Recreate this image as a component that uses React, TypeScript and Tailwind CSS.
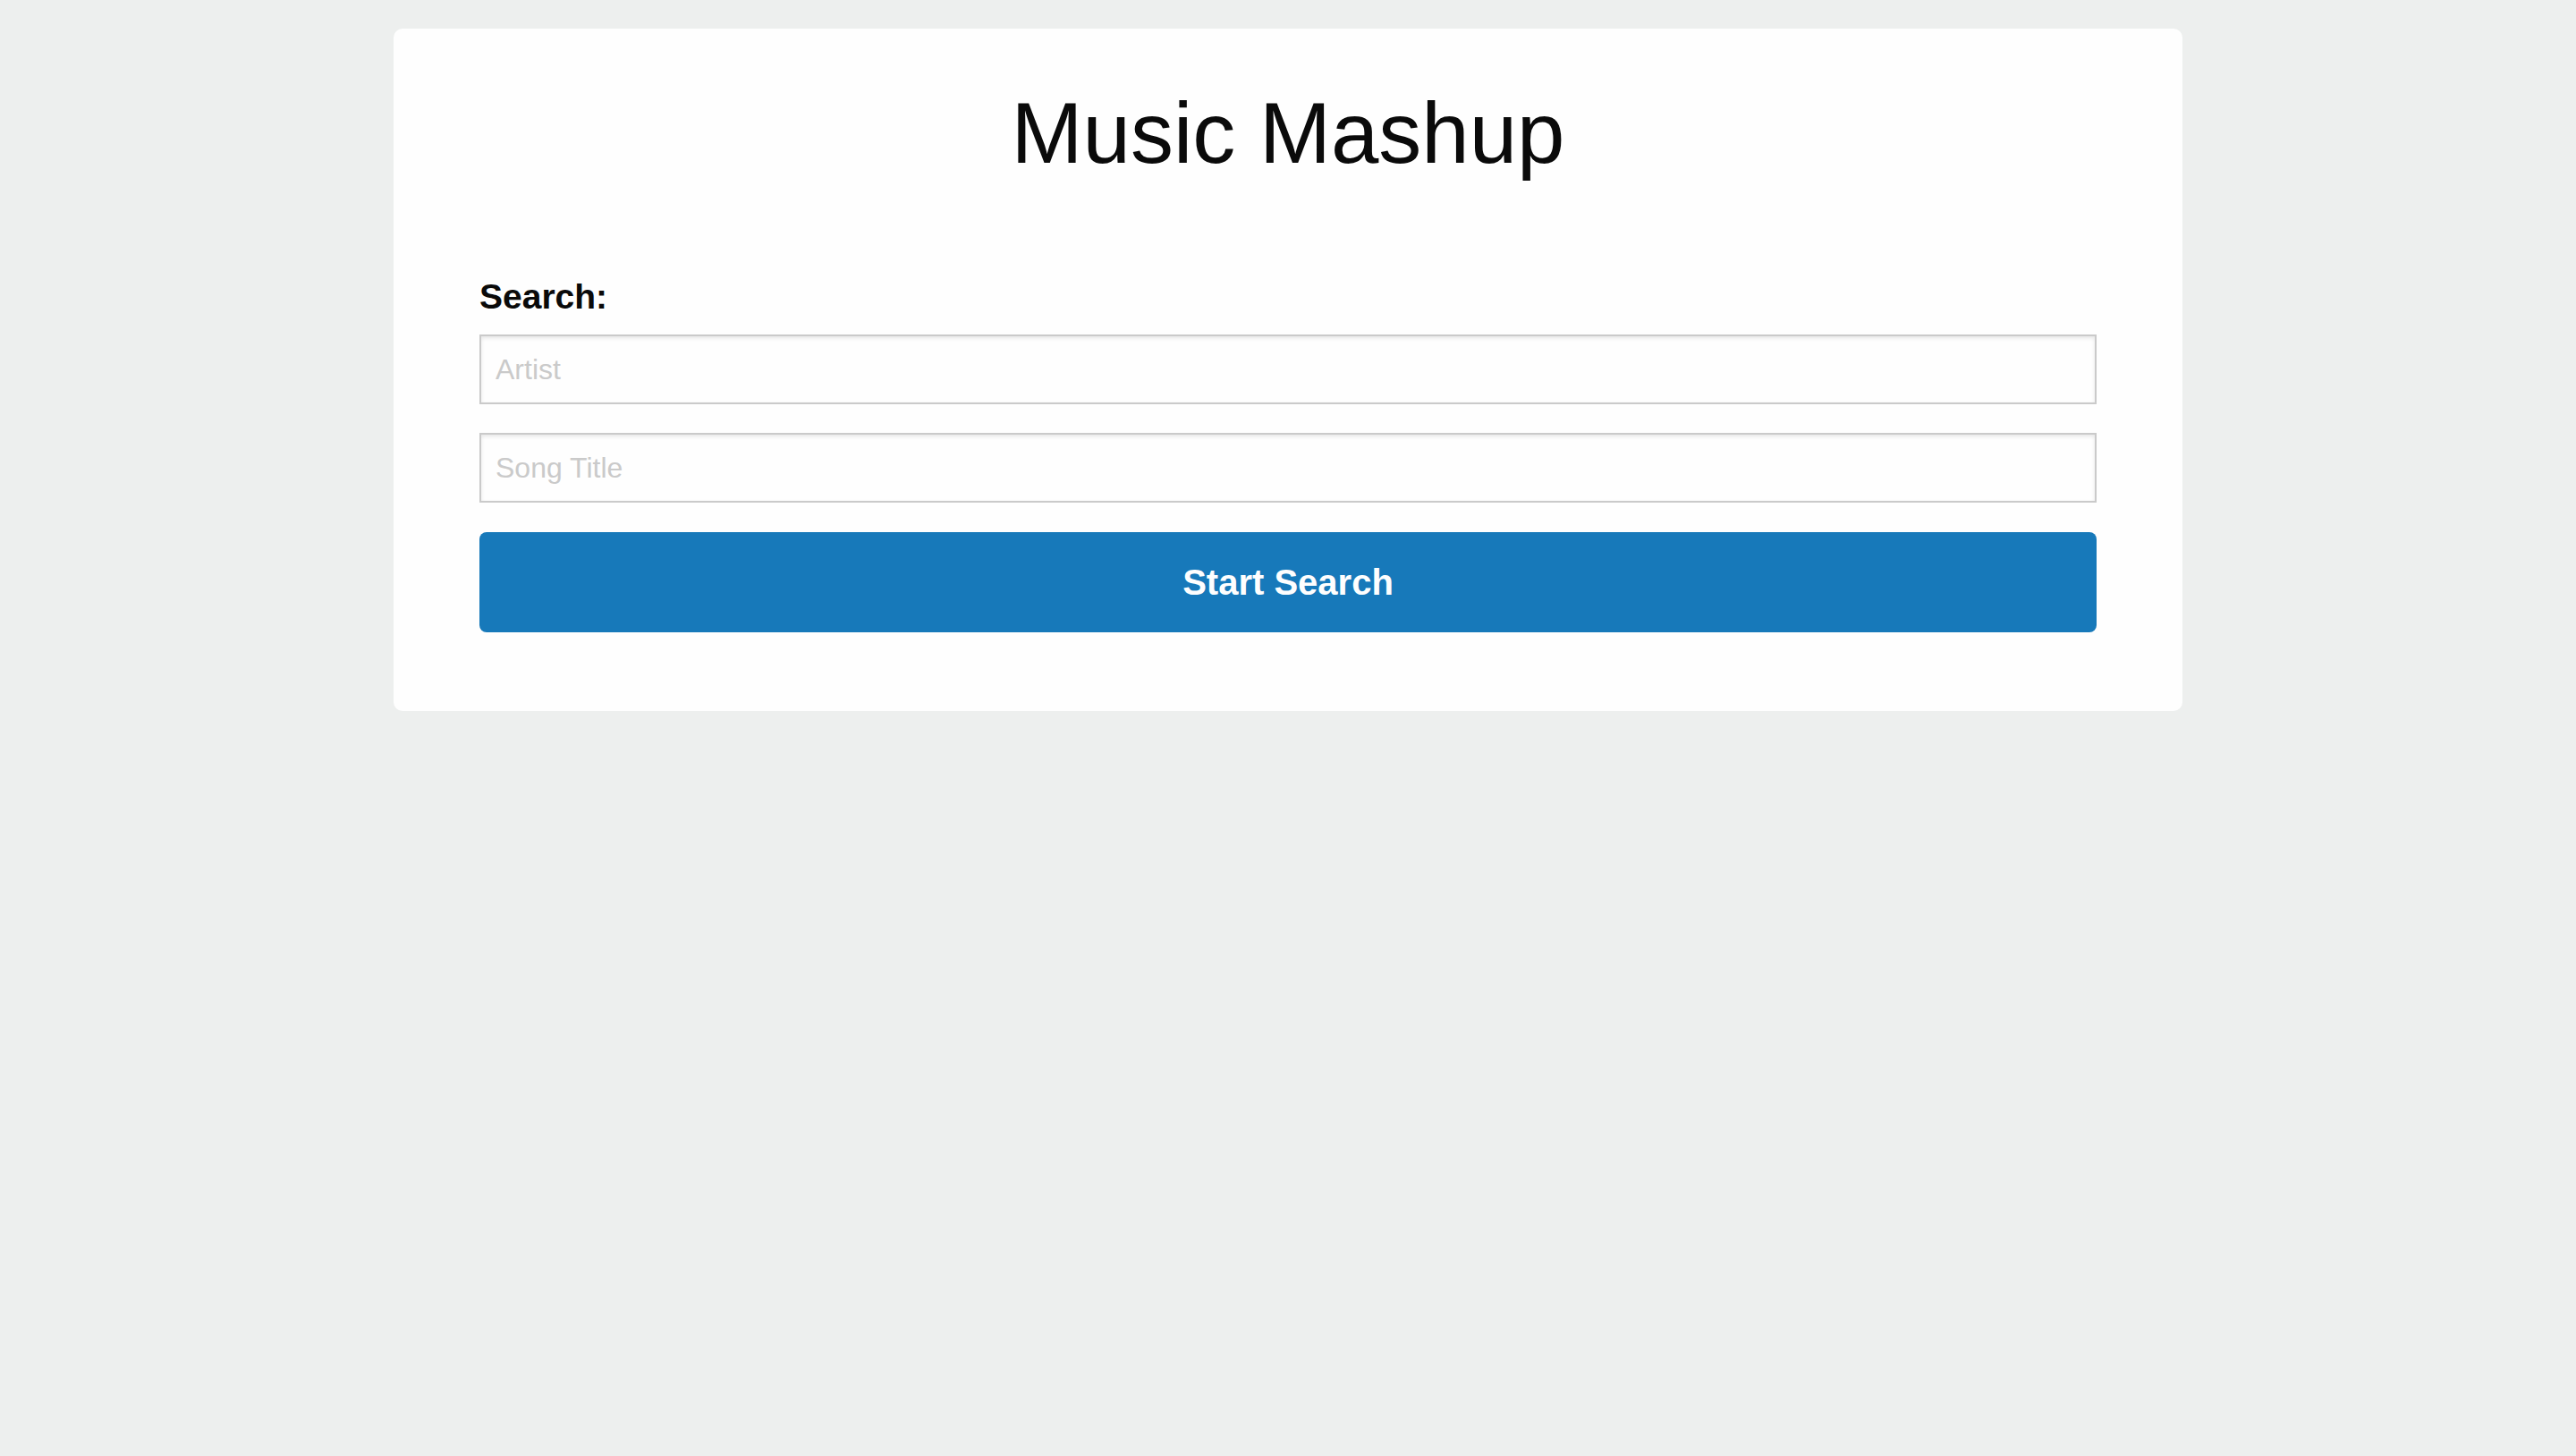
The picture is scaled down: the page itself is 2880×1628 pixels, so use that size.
import { useState } from "react";

const App = () => {
  const [artist, setArtist] = useState("");
  const [title, setTitle] = useState("");

  return (
    <div className="min-h-screen bg-[#edefee] pt-[32px] font-['Liberation_Sans',Arial,sans-serif] text-[#0a0a0a]">
      <div className="mx-auto w-[2000px] rounded-[10px] bg-[#fefefe] px-[96px] pt-[59px] pb-[88px]">
        {/* Title */}
        <h1 className="text-center text-[96px] leading-[115px] font-normal">
          Music Mashup
        </h1>

        {/* Search form */}
        <form className="mt-[102px]" onSubmit={(e) => e.preventDefault()}>
          <label className="block text-[39px] leading-[48px] font-bold">
            Search:
          </label>
          <div className="mt-[18px] flex flex-col gap-[32px]">
            <input
              value={artist}
              onChange={(e) => setArtist(e.target.value)}
              placeholder="Artist"
              className="h-[78px] w-full border-2 border-[#cacaca] bg-[#fefefe] px-[16px] text-[32px] text-[#0a0a0a] shadow-[inset_0_2px_4px_rgba(10,10,10,0.1)] outline-none placeholder:text-[#cacaca]"
            />
            <input
              value={title}
              onChange={(e) => setTitle(e.target.value)}
              placeholder="Song Title"
              className="h-[78px] w-full border-2 border-[#cacaca] bg-[#fefefe] px-[16px] text-[32px] text-[#0a0a0a] shadow-[inset_0_2px_4px_rgba(10,10,10,0.1)] outline-none placeholder:text-[#cacaca]"
            />
          </div>
          <button
            type="submit"
            className="mt-[33px] flex h-[112px] w-full items-center justify-center rounded-[8px] bg-[#1779ba] text-[40px] font-bold text-[#fefefe]"
          >
            Start Search
          </button>
        </form>
      </div>
    </div>
  );
};

export default App;
